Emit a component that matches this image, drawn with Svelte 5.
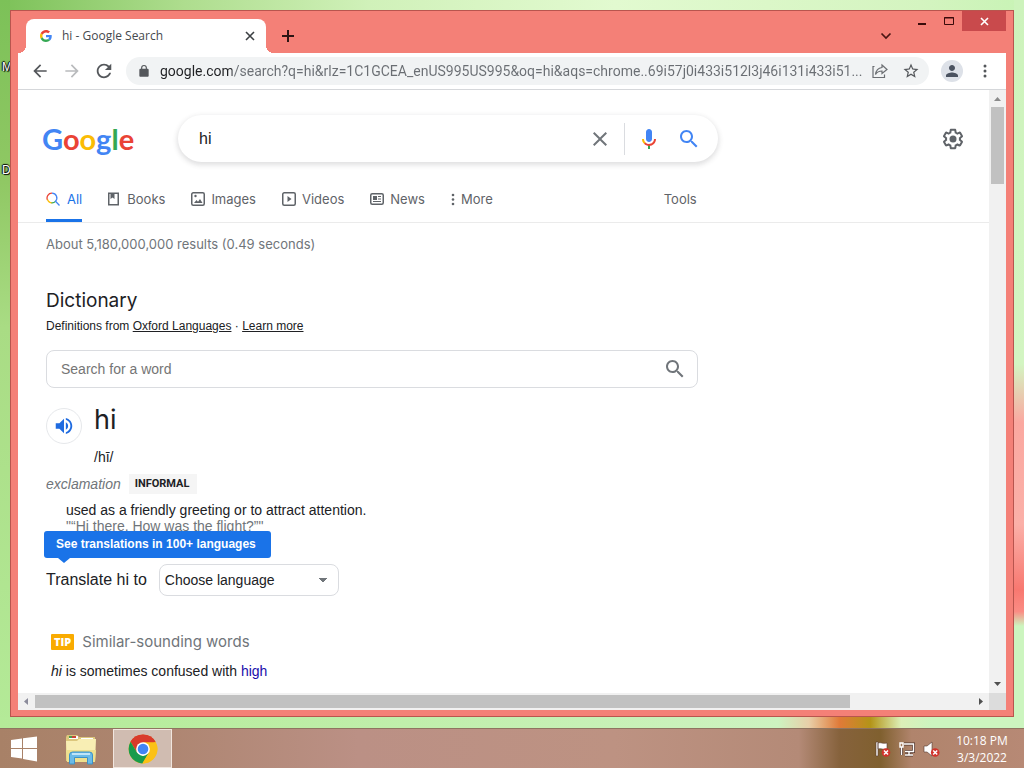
<script>
  const logo = [
    ['G', 'blue'],
    ['o', 'red'],
    ['o', 'yellow'],
    ['g', 'blue'],
    ['l', 'green'],
    ['e', 'red']
  ];
  const tabs = [
    { id: 'all', label: 'All' },
    { id: 'books', label: 'Books' },
    { id: 'images', label: 'Images' },
    { id: 'videos', label: 'Videos' },
    { id: 'news', label: 'News' },
    { id: 'more', label: 'More' }
  ];
  const languages = ['Choose language', 'Arabic', 'French', 'German', 'Spanish'];

  let current = $state('all');
  let query = $state('hi');
  let word = $state('');
  let language = $state('Choose language');
  let address = $state(
    'google.com/search?q=hi&rlz=1C1GCEA_enUS995US995&oq=hi&aqs=chrome..69i57j0i433i512l3j46i131i433i51...'
  );
</script>

{#snippet magnifier(size)}
  <svg width={size} height={size} viewBox="0 0 24 24" fill="currentColor" aria-hidden="true">
    <path d="M15.5 14h-.79l-.28-.27C15.41 12.59 16 11.11 16 9.5 16 5.91 13.09 3 9.5 3S3 5.91 3 9.5 5.91 16 9.5 16c1.61 0 3.09-.59 4.23-1.57l.27.28v.79l5 4.99L20.49 19l-4.99-5zm-6 0C7.01 14 5 11.99 5 9.5S7.01 5 9.5 5 14 7.01 14 9.5 11.99 14 9.5 14z" />
  </svg>
{/snippet}

<div class="screen">
  <div class="desktop">
    <span class="shortcut first">My</span>
    <span class="shortcut second">Do</span>

    <section class="window" aria-label="hi - Google Search">
      <header class="titlebar">
        <div class="tab">
          <svg width="12" height="12" viewBox="0 0 48 48" aria-hidden="true">
            <path fill="#EA4335" d="M24 9.5c3.54 0 6.71 1.22 9.21 3.6l6.85-6.85C35.9 2.38 30.47 0 24 0 14.62 0 6.51 5.38 2.56 13.22l7.98 6.19C12.43 13.72 17.74 9.5 24 9.5z" />
            <path fill="#4285F4" d="M46.98 24.55c0-1.57-.15-3.09-.38-4.55H24v9.02h12.94c-.58 2.96-2.26 5.48-4.78 7.18l7.73 6c4.51-4.18 7.09-10.36 7.09-17.65z" />
            <path fill="#FBBC05" d="M10.53 28.59c-.48-1.45-.76-2.99-.76-4.59s.27-3.14.76-4.59l-7.98-6.19C.92 16.46 0 20.12 0 24c0 3.88.92 7.54 2.56 10.78l7.97-6.19z" />
            <path fill="#34A853" d="M24 48c6.48 0 11.93-2.13 15.89-5.81l-7.73-6c-2.15 1.45-4.92 2.3-8.16 2.3-6.26 0-11.57-4.22-13.47-9.91l-7.98 6.19C6.51 42.62 14.62 48 24 48z" />
          </svg>
          <span class="tab-title">hi - Google Search</span>
          <button class="plain" aria-label="Close tab">
            <svg width="10" height="10" viewBox="0 0 10 10" stroke="#3c4043" stroke-width="1.600" aria-hidden="true"><path d="M1 1l8 8M9 1l-8 8" /></svg>
          </button>
        </div>
        <button class="plain new-tab" aria-label="New tab">
          <svg width="12" height="12" viewBox="0 0 12 12" stroke="#2b1413" stroke-width="2" aria-hidden="true"><path d="M6 0v12M0 6h12" /></svg>
        </button>
        <button class="plain tab-search" aria-label="Search tabs">
          <svg width="12" height="8" viewBox="0 0 12 8" fill="none" stroke="#4a1513" stroke-width="1.700" aria-hidden="true"><path d="M1.500 1.500L6 6l4.500-4.500" /></svg>
        </button>
        <div class="caption">
          <button class="plain" aria-label="Minimize">
            <svg width="12" height="12" viewBox="0 0 12 12" aria-hidden="true"><path fill="#3a0b0a" d="M2 8h8v2H2z" /></svg>
          </button>
          <button class="plain" aria-label="Maximize">
            <svg width="12" height="12" viewBox="0 0 12 12" fill="none" stroke="#3a0b0a" aria-hidden="true"><path d="M1.500 2.500h9v7h-9zM1 3h10" /></svg>
          </button>
          <button class="plain close" aria-label="Close window">
            <svg width="9" height="9" viewBox="0 0 9 9" stroke="#fff" stroke-width="1.600" aria-hidden="true"><path d="M1 1l7 7M8 1L1 8" /></svg>
          </button>
        </div>
      </header>

      <div class="toolbar">
        <button class="plain" aria-label="Back">
          <svg width="20" height="20" viewBox="0 0 24 24" fill="#54575b" aria-hidden="true"><path d="M20 11H7.830l5.590-5.590L12 4l-8 8 8 8 1.410-1.410L7.830 13H20v-2z" /></svg>
        </button>
        <button class="plain" aria-label="Forward">
          <svg width="20" height="20" viewBox="0 0 24 24" fill="#b9bbbd" aria-hidden="true"><path d="M12 4l-1.410 1.410L16.170 11H4v2h12.170l-5.580 5.590L12 20l8-8z" /></svg>
        </button>
        <button class="plain" aria-label="Reload">
          <svg width="20" height="20" viewBox="1 1 22 22" fill="#54575b" aria-hidden="true"><path d="M17.650 6.350C16.200 4.900 14.210 4 12 4c-4.420 0-7.990 3.580-7.990 8s3.570 8 7.990 8c3.730 0 6.840-2.550 7.730-6h-2.080c-.82 2.330-3.040 4-5.650 4-3.310 0-6-2.690-6-6s2.690-6 6-6c1.660 0 3.140.69 4.220 1.780L13 11h7V4l-2.350 2.350z" /></svg>
        </button>
        <div class="omnibox">
          <svg width="14" height="14" viewBox="0 0 24 24" fill="#54575b" aria-hidden="true"><path d="M18 8h-1V6.500a5 5 0 0 0-10 0V8H6c-1.100 0-2 .9-2 2v10c0 1.100.9 2 2 2h12c1.100 0 2-.9 2-2V10c0-1.100-.9-2-2-2zM9 8V6.500a3 3 0 0 1 6 0V8z" /></svg>
          <input class="address" type="text" aria-label="Address and search bar" bind:value={address} />
          <button class="plain" aria-label="Share this page">
            <svg width="16" height="16" viewBox="0 0 16 16" fill="none" stroke="#6b6e72" stroke-width="1.200" aria-hidden="true"><path d="M2.500 3.500H1v11h11.500v-3M10 2l5 4.500-5 4V8C7 8 5 9 3.500 11.500 4 7.500 6 5 10 4.500z" /></svg>
          </button>
          <button class="plain" aria-label="Bookmark this tab">
            <svg width="18" height="18" viewBox="0 0 24 24" fill="#54575b" aria-hidden="true"><path d="M22 9.240l-7.190-.62L12 2 9.190 8.630 2 9.240l5.460 4.730L5.820 21 12 17.270 18.180 21l-1.630-7.030L22 9.240zM12 15.400l-3.760 2.270 1-4.280-3.320-2.880 4.380-.38L12 6.100l1.710 4.040 4.380.38-3.320 2.880 1 4.280L12 15.400z" /></svg>
          </button>
        </div>
        <button class="plain avatar" aria-label="Profile">
          <svg width="18" height="18" viewBox="0 0 24 24" fill="#4a5260" aria-hidden="true"><path d="M12 12c2.210 0 4-1.790 4-4s-1.790-4-4-4-4 1.790-4 4 1.790 4 4 4zm0 2c-2.670 0-8 1.340-8 4v2h16v-2c0-2.660-5.330-4-8-4z" /></svg>
        </button>
        <button class="plain" aria-label="Browser menu">
          <svg width="20" height="20" viewBox="0 0 20 20" fill="#54575b" aria-hidden="true"><circle cx="10" cy="5" r="1.500" /><circle cx="10" cy="10" r="1.500" /><circle cx="10" cy="15" r="1.500" /></svg>
        </button>
      </div>

      <div class="viewport">
        <main class="page">
          <div class="search-row">
            <a class="logo" href="#home" aria-label="Google">
              {#each logo as [letter, tone]}<span class={tone}>{letter}</span>{/each}
            </a>
            <form class="searchbox" onsubmit={(e) => e.preventDefault()}>
              <input type="text" aria-label="Search" bind:value={query} />
              <button type="button" class="plain clear" aria-label="Clear" onclick={() => (query = '')}>
                <svg width="24" height="24" viewBox="0 0 24 24" fill="#70757a" aria-hidden="true"><path d="M19 6.410L17.590 5 12 10.590 6.410 5 5 6.410 10.590 12 5 17.590 6.410 19 12 13.410 17.590 19 19 17.590 13.410 12z" /></svg>
              </button>
              <button type="button" class="plain" aria-label="Search by voice">
                <svg width="24" height="24" viewBox="0 0 24 24" aria-hidden="true">
                  <path fill="#4285f4" d="m12 15c1.660 0 3-1.310 3-2.970v-7.020c0-1.660-1.340-3.010-3-3.010s-3 1.340-3 3.010v7.020c0 1.660 1.340 2.970 3 2.970z" />
                  <path fill="#34a853" d="m11 18.080h2v3.920h-2z" />
                  <path fill="#fbbc05" d="m7.050 16.870c-1.270-1.330-2.050-2.830-2.050-4.870h2c0 1.450 0.560 2.420 1.470 3.380v0.320l-1.150 1.180z" />
                  <path fill="#ea4335" d="m12 16.930a4.970 5.250 0 0 1 -3.540 -1.550l-1.410 1.490c1.260 1.340 3.020 2.130 4.950 2.130 3.870 0 6.990-2.920 6.990-7h-1.990c0 2.920-2.240 4.930-5 4.930z" />
                </svg>
              </button>
              <button class="plain submit" aria-label="Google Search">{@render magnifier(24)}</button>
            </form>
            <button class="plain settings" aria-label="Settings">
              <svg width="24" height="24" viewBox="0 0 24 24" fill="#5f6368" aria-hidden="true">
                <path d="M13.850 22.250h-3.700c-.74 0-1.360-.54-1.450-1.270l-.27-1.890c-.27-.14-.53-.29-.79-.46l-1.800.72c-.7.26-1.470-.03-1.810-.65L2.200 15.530c-.35-.66-.2-1.440.36-1.880l1.530-1.190c-.01-.15-.02-.3-.02-.46 0-.15.01-.31.02-.46l-1.520-1.190c-.59-.45-.74-1.260-.37-1.880l1.850-3.190c.34-.62 1.110-.9 1.790-.63l1.810.73c.26-.17.52-.32.78-.46l.27-1.910c.09-.7.71-1.250 1.440-1.250h3.700c.74 0 1.360.54 1.450 1.270l.27 1.890c.27.14.53.29.79.46l1.800-.72c.71-.26 1.480.03 1.820.65l1.840 3.180c.36.66.2 1.440-.36 1.880l-1.520 1.190c.01.15.02.3.02.46s-.01.31-.02.46l1.520 1.190c.56.45.72 1.230.37 1.860l-1.860 3.220c-.34.62-1.110.9-1.800.63l-1.800-.72c-.26.17-.52.32-.78.46l-.27 1.910c-.1.68-.72 1.220-1.460 1.220zm-3.230-2h2.760l.37-2.550.53-.22c.44-.18.88-.44 1.340-.78l.45-.34 2.380.96 1.380-2.400-2.030-1.580.07-.56c.03-.26.06-.51.06-.78s-.03-.53-.06-.78l-.07-.56 2.030-1.580-1.390-2.400-2.390.96-.45-.35c-.42-.32-.87-.58-1.330-.77l-.52-.22-.37-2.550h-2.760l-.37 2.550-.53.21c-.44.19-.88.44-1.340.79l-.45.33-2.380-.95-1.390 2.390 2.030 1.580-.07.56a7 7 0 0 0-.06.79c0 .26.02.53.06.78l.07.56-2.030 1.580 1.380 2.400 2.390-.96.45.35c.43.33.86.58 1.330.77l.53.22.38 2.550z" />
                <circle cx="12" cy="12" r="3.500" />
              </svg>
            </button>
          </div>

          <nav class="tabs" aria-label="Result types">
            {#each tabs as t}
              <a href="#{t.id}" class:active={current === t.id} onclick={() => (current = t.id)}>
                {#if t.id === 'all'}
                  <svg width="15" height="16" viewBox="1 0 15 16" fill="none" stroke-width="1.300" aria-hidden="true">
                    <path stroke="#ea4335" d="M2.500 9A4.800 4.800 0 0 1 7 2.200" />
                    <path stroke="#fbbc05" d="M7 11.800A4.800 4.800 0 0 1 2.500 8.500" />
                    <path stroke="#34a853" d="M10.500 10.400A4.800 4.800 0 0 1 6.500 11.800" />
                    <path stroke="#4285f4" d="M7 2.200a4.800 4.800 0 0 1 3.500 8.100L14.500 14.500" />
                  </svg>
                {:else if t.id === 'books'}
                  <svg width="13" height="16" viewBox="2 0 13 16" aria-hidden="true"><path fill="none" stroke="#5f6368" stroke-width="1.500" d="M2.750 2.250h9.500v11.500h-9.500z" /><path fill="#5f6368" d="M4.500 2h4v6l-2-1.500-2 1.500z" /></svg>
                {:else if t.id === 'images'}
                  <svg width="14" height="16" viewBox="0 0 14 16" aria-hidden="true"><rect x=".75" y="1.750" width="12.500" height="12.500" rx="1.500" fill="none" stroke="#5f6368" stroke-width="1.500" /><path fill="#5f6368" d="M3 12l2.500-3 1.500 1.700L9 8l2.500 4z" /><circle cx="4.500" cy="5" r="1.200" fill="#5f6368" /></svg>
                {:else if t.id === 'videos'}
                  <svg width="14" height="16" viewBox="0 0 14 16" aria-hidden="true"><rect x=".75" y="1.750" width="12.500" height="12.500" rx="1.500" fill="none" stroke="#5f6368" stroke-width="1.500" /><path fill="#5f6368" d="M5.500 5v6L9.500 8z" /></svg>
                {:else if t.id === 'news'}
                  <svg width="14" height="16" viewBox="0 0 14 16" aria-hidden="true"><rect x=".75" y="2.750" width="12.500" height="10.500" rx="1.500" fill="none" stroke="#5f6368" stroke-width="1.500" /><path fill="#5f6368" d="M3 5h4v4H3zM8 5h3v1H8zM8 7.500h3v1H8zM3 10h8v1H3z" /></svg>
                {:else}
                  <svg width="4" height="16" viewBox="0 0 4 16" fill="#5f6368" aria-hidden="true"><circle cx="2" cy="4" r="1.300" /><circle cx="2" cy="8.500" r="1.300" /><circle cx="2" cy="13" r="1.300" /></svg>
                {/if}
                <span>{t.label}</span>
              </a>
            {/each}
            <a class="tools" href="#tools">Tools</a>
          </nav>

          <div class="results">
            <p class="stats">About 5,180,000,000 results (0.49 seconds)</p>

            <h2>Dictionary</h2>
            <p class="source">Definitions from <a href="#oxford">Oxford Languages</a> · <a href="#learn">Learn more</a></p>

            <form class="wordbox" onsubmit={(e) => e.preventDefault()}>
              <input type="text" placeholder="Search for a word" aria-label="Search for a word" bind:value={word} />
              <button class="plain lookup" aria-label="Look up word">{@render magnifier(24)}</button>
            </form>

            <div class="headword">
              <button class="plain speaker" aria-label="Listen">
                <svg width="22" height="22" viewBox="0 0 24 24" fill="#1f6be0" aria-hidden="true"><path d="M3 9v6h4l5 5V4L7 9H3zm13.500 3c0-1.770-1.020-3.290-2.500-4.030v8.050c1.480-.73 2.500-2.250 2.500-4.020zM14 3.230v2.060c2.890.86 5 3.540 5 6.710s-2.110 5.850-5 6.710v2.060c4.010-.91 7-4.490 7-8.770s-2.990-7.860-7-8.770z" /></svg>
              </button>
              <div>
                <h3>hi</h3>
                <p class="phonetic">/hī/</p>
              </div>
            </div>

            <p class="pos"><i>exclamation</i><span class="badge">INFORMAL</span></p>
            <p class="sense">used as a friendly greeting or to attract attention.<br /><q>“Hi there. How was the flight?”</q></p>

            <div class="translate">
              <label for="language">Translate hi to</label>
              <select id="language" bind:value={language}>
                {#each languages as name}<option>{name}</option>{/each}
              </select>
              <div class="tooltip" role="tooltip">See translations in 100+ languages</div>
            </div>

            <div class="tip">
              <p class="tip-head"><span class="tip-badge">TIP</span>Similar-sounding words</p>
              <p class="tip-text"><i>hi</i> is sometimes confused with <a href="#high">high</a></p>
            </div>
          </div>
        </main>
        <div class="vbar" aria-hidden="true">
          <svg width="17" height="17" viewBox="0 0 17 17" fill="#8b8b8b"><path d="M5 11l3.500-4 3.500 4z" /></svg>
          <div class="vthumb"></div>
          <svg class="end" width="17" height="17" viewBox="0 0 17 17" fill="#505050"><path d="M5 6l3.500 4L12 6z" /></svg>
        </div>
        <div class="hbar" aria-hidden="true">
          <svg width="17" height="17" viewBox="0 0 17 17" fill="#8b8b9b"><path d="M10 5L6 8.500l4 3.500z" /></svg>
          <div class="htrack"><div class="hthumb"></div></div>
          <svg width="17" height="17" viewBox="0 0 17 17" fill="#505050"><path d="M7 5l4 3.500L7 12z" /></svg>
        </div>
        <div class="corner"></div>
      </div>
    </section>
  </div>

  <footer class="taskbar">
    <button class="plain start" aria-label="Start">
      <svg width="28" height="26" viewBox="0 0 28 26" fill="#fff" aria-hidden="true"><path d="M1 4l11-1.500V12H1zM13 2.300L27 .5V12H13zM1 13h11v9.500L1 21zM13 13h14v12.500L13 23z" /></svg>
    </button>
    <button class="plain explorer" aria-label="File Explorer">
      <svg width="34" height="32" viewBox="0 0 34 32" aria-hidden="true">
        <path fill="#dcc77c" d="M2 4l1-2h10l2 2h16v24H2z" />
        <path fill="#fff" d="M5 3h9v3H5zM17 5h12v3H17z" />
        <path fill="#c8463a" d="M8 3h4v2H8z" /><path fill="#4c9a4c" d="M5 3h3v2H5z" /><path fill="#5a7fae" d="M21 6h5v1h-5z" />
        <path fill="#f8eeb4" d="M2 8h11l2-2h17l-1 23H3z" />
        <path fill="#eee08e" d="M2 17h30l-1 12H3z" />
        <path fill="#6bbbe8" stroke="#3d92c6" d="M5.500 31v-9q0-3 3-3h17q3 0 3 3v9h-5v-6.500h-13V31z" />
        <path fill="#bfe5f8" d="M8 20h18v2H8z" />
      </svg>
    </button>
    <button class="plain running" aria-label="Google Chrome">
      <svg width="30" height="30" viewBox="0 0 48 48" aria-hidden="true">
        <circle cx="24" cy="24" r="23" fill="#fbc116" />
        <path fill="#d93a2b" d="M24 24L4.080 12.500A23 23 0 0 1 43.920 12.500z" />
        <path fill="#d93a2b" d="M24 13h20.180A23 23 0 0 0 4.080 12.500L14.500 29.500z" />
        <path fill="#189b4c" d="M4.080 12.500A23 23 0 0 0 23 47l10.500-17.500-9.500 5.500-9.530-5.500z" />
        <path fill="#fbc116" d="M24 13h20.180A23 23 0 0 1 23 47l10.530-17.500z" />
        <circle cx="24" cy="24" r="11" fill="#fff" />
        <circle cx="24" cy="24" r="8.500" fill="#4285f4" />
      </svg>
    </button>
    <div class="tray">
      <button class="plain" aria-label="Action Center">
        <svg width="16" height="16" viewBox="0 0 16 16" aria-hidden="true"><path fill="#fff" stroke="#55392f" stroke-width=".6" d="M1 1h2v14H1zM3 2c3-1 4 1 9 0v6c-4 1-6-1-9 0z" /><circle cx="11" cy="11.500" r="4.300" fill="#d2332b" /><path stroke="#fff" stroke-width="1.500" d="M9 9.500l4 4M13 9.500l-4 4" /></svg>
      </button>
      <button class="plain" aria-label="Network">
        <svg width="16" height="16" viewBox="0 0 16 16" fill="none" aria-hidden="true"><path stroke="#55392f" stroke-width="3" d="M5 3h9.500v7.500H6M10 11v3M6 14h8M2.500 6v8" /><path stroke="#fff" stroke-width="1.400" d="M5 3h9.500v7.500H6M10 11v3M6 14h8M2.500 6v8M1 2h3v4H1z" /></svg>
      </button>
      <button class="plain" aria-label="Volume muted">
        <svg width="17" height="16" viewBox="0 0 17 16" aria-hidden="true"><path fill="#fff" stroke="#55392f" stroke-width=".6" d="M1 5h3l5-4v14l-5-4H1z" /><circle cx="12.200" cy="11.500" r="4.300" fill="#d2332b" /><path stroke="#fff" stroke-width="1.500" d="M10.200 9.500l4 4M14.200 9.500l-4 4" /></svg>
      </button>
    </div>
    <time class="clock">10:18 PM<br />3/3/2022</time>
  </footer>
</div>

<style>
  :global(body) { margin: 0; }
  * { box-sizing: border-box; }
  p, h2, h3 { margin: 0; font-weight: 400; }
  svg { display: block; flex: none; }
  input { min-width: 0; border: 0; padding: 0; background: none; outline: none; font: inherit; color: inherit; }
  .plain { display: flex; align-items: center; justify-content: center; border: 0; padding: 0; background: none; flex: none; }

  .screen {
    height: 100vh;
    display: flex;
    flex-direction: column;
    font-family: "Liberation Sans", Arial, sans-serif;
  }
  .desktop {
    position: relative;
    flex: 1;
    min-height: 0;
    display: flex;
    padding: 10px 10px 11px;
    background:
      linear-gradient(to right, #b4ea98 0%, #b9eda0 20%, #cdf3c0 76%, #e8cfa8 79%, #e07a38 82%, #b49418 85%, #dcf0b8 88%, #ccf5bf 91%, #ccf5bf 100%) bottom / 100% 11px no-repeat,
      linear-gradient(to bottom, #cdf3bc 0%, #d3f5c2 50%, #fba8a0 58%, #fbb0a8 72%, #f87870 81%, #fb8c84 84%, #ccf5bf 86%) right / 10px 100% no-repeat,
      linear-gradient(to bottom, #7cc158 0%, #90c864 25%, #a9dc84 45%, #b4ea98 100%) left / 10px 100% no-repeat,
      linear-gradient(to right, #7cc158 0%, #aedd8e 18%, #d0f1b9 36%, #e2fad0 60%, #d4f4c0 90%, #c8f3b5 100%);
  }
  .shortcut { position: absolute; left: 2px; font-size: 12px; line-height: 14px; color: #fff; text-shadow: 1px 1px 1px #000, -1px 0 1px #000, 0 -1px 1px #000; }
  .first { top: 60px; }
  .second { top: 163px; }

  .window {
    position: relative;
    flex: 1;
    min-width: 0;
    display: flex;
    flex-direction: column;
    padding: 0 7px 6px;
    background: #f48077;
    border: 1px solid #b8554e;
  }
  .titlebar { display: flex; align-items: flex-end; height: 42px; flex: none; padding-left: 8px; }
  .tab {
    position: relative;
    display: flex;
    align-items: center;
    gap: 10px;
    width: 240px;
    height: 34px;
    padding: 0 11px 0 14px;
    background: #fff;
    border-radius: 8px 8px 0 0;
  }
  .tab::before, .tab::after { content: ""; position: absolute; bottom: 0; width: 8px; height: 8px; }
  .tab::before { right: 100%; background: radial-gradient(circle at 0 0, transparent 8px, #fff 8px); }
  .tab::after { left: 100%; background: radial-gradient(circle at 100% 0, transparent 8px, #fff 8px); }
  .tab-title { flex: 1; font: 12px/16px "Open Sans", "Noto Sans", sans-serif; color: #45494d; }
  .new-tab { width: 28px; height: 34px; margin-left: 8px; }
  .tab-search { width: 28px; height: 34px; margin-left: auto; }
  .caption { display: flex; align-self: flex-start; margin-left: 8px; }
  .caption .plain { width: 27px; height: 20px; }
  .caption .close { width: 44px; background: #c94a4c; }

  .toolbar { display: flex; align-items: center; gap: 12px; height: 37px; flex: none; padding: 0 11px 0 12px; background: #fff; border-bottom: 1px solid #d5d7da; }
  .omnibox { flex: 1; min-width: 0; display: flex; align-items: center; gap: 14px; height: 28px; padding: 0 9px 0 11px; border-radius: 14px; background: #f1f3f4; }
  .address {
    flex: 1;
    font: 14px/20px Roboto, "Open Sans", sans-serif;
    text-overflow: ellipsis;
    margin: 0 -6px 0 -5px;
    background: linear-gradient(to right, #202124 72px, #6a6e73 72px);
    -webkit-background-clip: text;
    background-clip: text;
    -webkit-text-fill-color: transparent;
  }
  .avatar { width: 22px; height: 22px; border-radius: 50%; background: #dde1e8; }

  .viewport { flex: 1; min-height: 0; display: grid; grid-template-columns: minmax(0, 1fr) 17px; grid-template-rows: minmax(0, 1fr) 17px; background: #fff; }
  .page { overflow: hidden; }

  .search-row { display: flex; align-items: center; padding: 25px 24px 0; }
  .logo { width: 136px; font: 700 29px/44px Lato, sans-serif; text-decoration: none; }
  .blue { color: #4285f4; }
  .red { color: #ea4335; }
  .yellow { color: #fbbc05; }
  .green { color: #34a853; }
  .searchbox { display: flex; align-items: center; width: 540px; height: 47px; padding: 0 17px 0 21px; border-radius: 24px; background: #fff; box-shadow: 0 2px 5px 1px rgba(64, 60, 67, .16); }
  .searchbox input { flex: 1; font-size: 16px; color: #202124; }
  .clear { padding-right: 12px; margin-right: 12px; height: 32px; border-right: 1px solid #dadce0; }
  .submit { margin-left: 16px; color: #4285f4; }
  .settings { margin-left: auto; }

  .tabs { display: flex; height: 61px; padding: 14px 0 0 28px; border-bottom: 1px solid #ebebeb; font: 13px/20px Inter, sans-serif; }
  .tabs a { display: flex; gap: 6px; align-items: center; height: 46px; padding-top: 2px; margin-right: 26px; color: #5f6368; text-decoration: none; border-bottom: 3px solid transparent; }
  .tabs .active { color: #1a73e8; border-color: #1a73e8; }
  .tabs .tools { margin-left: 145px; }

  .results { padding: 11px 28px; color: #202124; }
  .stats { font: 13px/20px Inter, sans-serif; color: #70757a; }
  h2 { margin-top: 35px; font: 19px/24px Inter, sans-serif; }
  .source { margin-top: 5px; font-size: 12px; line-height: 16px; }
  .source a { color: inherit; text-underline-offset: 1px; }
  .wordbox { display: flex; align-items: center; width: 652px; height: 38px; margin-top: 16px; padding: 0 10px 0 14px; border: 1px solid #dadce0; border-radius: 8px; }
  .wordbox input { flex: 1; font-size: 14px; }
  .wordbox input::placeholder { color: #757575; opacity: 1; }
  .lookup { color: #70757a; }

  .headword { display: flex; gap: 12px; margin-top: 14px; }
  .speaker { width: 36px; height: 36px; margin-top: 6px; border: 1px solid #e6e8eb; border-radius: 50%; }
  h3 { font: 27px/36px Inter, sans-serif; }
  .phonetic { margin-top: 9px; font-size: 14px; line-height: 20px; }
  .pos { display: flex; align-items: center; gap: 8px; margin-top: 7px; font-size: 14px; line-height: 20px; color: #70757a; }
  .badge { padding: 0 8px 0 6px; font: 700 11px/20px Roboto, sans-serif; color: #202124; background: #f5f5f5; }
  .sense { margin: 8px 0 0 20px; font-size: 14px; line-height: 16px; }
  .sense q { color: #70757a; quotes: '"' '"'; }

  .translate { position: relative; display: flex; align-items: center; gap: 12px; margin-top: 30px; font-size: 16px; }
  select {
    width: 180px;
    height: 32px;
    padding: 0 5px;
    appearance: none;
    border: 1px solid #dadce0;
    border-radius: 8px;
    font: 14px/20px "Liberation Sans", Arial, sans-serif;
    color: #202124;
    background:
      linear-gradient(to bottom right, #70757a 50%, transparent 51%) right 11px center / 4px 4px no-repeat,
      linear-gradient(to bottom left, #70757a 50%, transparent 51%) right 15px center / 4px 4px no-repeat,
      #fff;
  }
  .tooltip { position: absolute; left: -2px; bottom: 38px; padding: 0 15px 0 12px; font-size: 12px; font-weight: 700; line-height: 27px; white-space: nowrap; color: #fff; background: #1a73e8; border-radius: 3px; }
  .tooltip::after { content: ""; position: absolute; left: 14px; top: 100%; border: 6px solid transparent; border-top: 5px solid #1a73e8; border-bottom: 0; }

  .tip { margin-top: 34px; padding-left: 5px; }
  .tip-head { display: flex; align-items: center; gap: 8px; font: 15px/24px Inter, sans-serif; color: #70757a; }
  .tip-badge { padding: 0 3px; font: 800 11px/16px "Open Sans", sans-serif; color: #fff; background: #f9ab00; border-radius: 1px; }
  .tip-text { margin-top: 7px; font-size: 14px; line-height: 20px; }
  .tip-text a { color: #1a0dab; text-decoration: none; }

  .vbar { display: flex; flex-direction: column; align-items: center; background: #f1f1f1; }
  .vthumb { width: 13px; height: 77px; background: #c1c1c1; }
  .end { margin-top: auto; }
  .hbar { display: flex; align-items: center; background: #f1f1f1; }
  .htrack { flex: 1; }
  .hthumb { width: 87%; height: 13px; background: #c1c1c1; }
  .corner { background: #dcdcdc; }

  .taskbar {
    display: flex;
    align-items: center;
    height: 40px;
    flex: none;
    border-top: 1px solid #8f7460;
    background: linear-gradient(to right, #a88167 0%, #ad8570 15%, #bb9085 35%, #bd9282 60%, #b48a77 78%, #86623c 82%, #80602f 86%, #b0846c 89%, #b78975 100%);
  }
  .start { width: 48px; height: 39px; }
  .explorer { width: 65px; height: 39px; }
  .running { width: 59px; height: 39px; border: 1px solid #f1e6df; background: #d0bcb1; }
  .tray { display: flex; gap: 8px; margin-left: auto; }
  .clock { width: 84px; text-align: center; font: 12px/17px "Open Sans", "Noto Sans", sans-serif; color: #fff; }
</style>
